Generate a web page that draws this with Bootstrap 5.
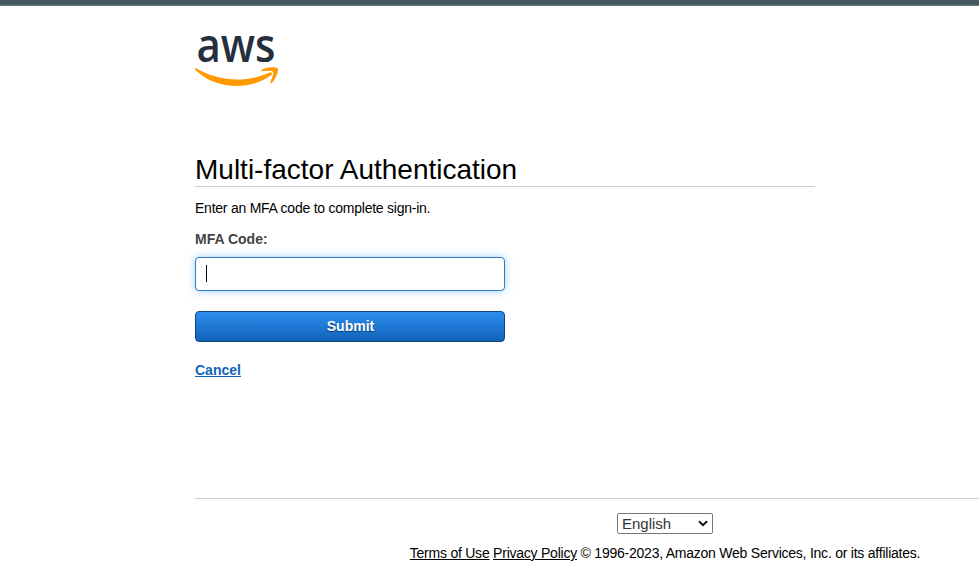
<!DOCTYPE html>
<html lang="en">
<head>
<meta charset="utf-8">
<meta name="viewport" content="width=device-width, initial-scale=1">
<title>Multi-factor Authentication</title>
<link href="https://cdn.jsdelivr.net/npm/bootstrap@5.3.0/dist/css/bootstrap.min.css" rel="stylesheet">
<style>
body{font-family:"Liberation Sans",Arial,sans-serif;font-size:14px;line-height:16px;color:#000;background:#fff}
.topbar{height:6px;background:#465a64;border-bottom:1px solid #6c7680}
.page{margin-left:195px}
.logo{display:block;width:90px;height:62px;margin-top:24px;overflow:visible}
.logo text{font-family:"Open Sans","Noto Sans",sans-serif;font-weight:600;font-size:47px}
.signin{width:620px;margin-top:60px;height:346px}
.title{font-size:28px;line-height:32px;font-weight:400;padding-top:2px;border-bottom:1px solid #ccc;height:35px}
.intro{letter-spacing:-.24px;margin-top:13px}
.code-label{font-size:14px;color:#444;margin-top:15px}
.code-box{width:310px;margin-top:10px}
.code-box .form-control,.code-box .form-control:focus{height:34px;border:1px solid #3478c2;border-radius:4px;box-shadow:0 0 8px rgba(60,165,255,.5)}
.caret{left:11px;top:8px;width:1px;height:17px;background:#000}
.submit{width:310px;height:31px;margin-top:20px;padding:0 0 1px 1px;font-size:14px;line-height:27px;font-weight:700;color:#fff;border:1px solid #14477c;border-radius:4px;background:linear-gradient(#2b8eef,#1163b8);text-shadow:0 1px 1px #073b70}
.cancel{color:#1166bb;margin-top:20px}
.foot{border-top:1px solid #ccc;padding-left:156px}
.lang{width:96px;height:21px;margin-top:14px}
.lang select{width:96px;height:21px;font-size:15px;line-height:19px;color:#333;border:1px solid #767676;border-radius:2px;padding:0 0 0 4px;appearance:none;background:#fff}
.lang svg{right:5px;top:7px}
.legal{margin-top:11px;letter-spacing:-.235px}
</style>
<script src="https://cdn.jsdelivr.net/npm/bootstrap@5.3.0/dist/js/bootstrap.bundle.min.js"></script>
</head>
<body>
<div class="topbar"></div>
<div class="page d-flex flex-column">
  <svg class="logo" viewBox="0 -2 90 62" role="img" aria-label="aws">
    <text x="1.500" y="30" textLength="79" lengthAdjust="spacingAndGlyphs" fill="#252f3e">aws</text>
    <g fill="#f90" transform="translate(0 .7)">
      <path d="M.8 35.4C23 48.800 51 50.500 74.700 39.800C76.700 39 78 41.200 76.300 42.400C56 57.600 22 57.900.4 37.300C-.6 36.300-.3 35.100.8 35.400Z"/>
      <path d="M66.500 37.200C71.500 33.600 81.200 34 82.700 35.800C84 37.700 81 46.700 76.600 50.200C75.700 50.900 74.900 50.500 75.300 49.500C76.500 46.600 79.200 40.700 77.900 39.100C76.700 37.600 70.900 38.200 67.400 38.600C66.200 38.700 65.700 37.900 66.500 37.200Z"/>
    </g>
  </svg>
  <main class="signin">
    <h1 class="title m-0">Multi-factor Authentication</h1>
    <p class="intro mb-0">Enter an MFA code to complete sign-in.</p>
    <label class="code-label d-block fw-bold" for="code">MFA Code:</label>
    <div class="code-box position-relative">
      <input id="code" class="form-control" type="text">
      <span class="caret position-absolute"></span>
    </div>
    <button class="submit btn d-block" type="button">Submit</button>
    <a class="cancel d-inline-block fw-bold text-decoration-underline" href="#">Cancel</a>
  </main>
  <footer class="foot d-flex flex-column align-items-center">
    <div class="lang position-relative">
      <select class="d-block" aria-label="Language"><option>English</option></select>
      <svg class="position-absolute" width="10" height="7" viewBox="0 0 10 7"><path d="M1 1.200 5 5.200 9 1.200" fill="none" stroke="#111" stroke-width="2"/></svg>
    </div>
    <div class="legal text-nowrap"><a class="text-reset" href="#">Terms of Use</a> <a class="text-reset" href="#">Privacy Policy</a> © 1996-2023, Amazon Web Services, Inc. or its affiliates.</div>
  </footer>
</div>
</body>
</html>
